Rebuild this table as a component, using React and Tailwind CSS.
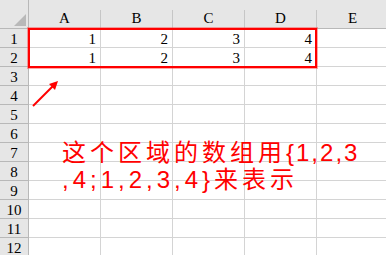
import React from 'react';

const COLS = ['A', 'B', 'C', 'D', 'E'];
const ROWS = Array.from({ length: 12 }, (_, i) => i + 1);
const DATA = {
    1: [1, 2, 3, 4, null],
    2: [1, 2, 3, 4, null],
};

function CornerCell() {
    return (
        <div className="w-[29px] h-full border-r border-[#b8b8b8] flex items-end justify-end">
            <svg width="28" height="28" viewBox="0 0 28 28" className="block">
                <polygon points="14,26 26,26 26,14" fill="#b9b9b9" />
            </svg>
        </div>
    );
}

export default function App() {
    return (
        <div className="relative w-[386px] h-[255px] overflow-hidden bg-white font-['Liberation_Serif',serif] text-black">
            {/* column headers */}
            <div className="flex h-[29px] bg-[#e6e6e6] border-b border-[#b8b8b8]">
                <CornerCell />
                {COLS.map(col => (
                    <div key={col} className="w-[72px] shrink-0 h-full pt-[10px]">
                        <div className="h-full border-r border-[#c6c6c6] flex items-end justify-center pb-[1px] text-[15px] leading-[18px]">
                            {col}
                        </div>
                    </div>
                ))}
            </div>

            {/* sheet rows */}
            {ROWS.map(row => (
                <div key={row} className="flex h-[19px]">
                    <div className="w-[29px] shrink-0 bg-[#e6e6e6] border-r border-b border-[#b8b8b8] flex items-center justify-center text-[15px] leading-none pt-[2px]">
                        {row}
                    </div>
                    {COLS.map((col, i) => (
                        <div key={col} className="w-[72px] shrink-0 border-r border-b border-[#d4d4d4] flex items-center justify-end pr-[4px] text-[15px] leading-none pt-[2px]">
                            {DATA[row] ? DATA[row][i] : null}
                        </div>
                    ))}
                </div>
            ))}

            {/* selected range outline */}
            <div className="absolute left-[28px] top-[28px] w-[289px] h-[40px] border-2 border-[#ff0000] shadow-[0_0_0_1px_rgba(255,60,60,0.45)]" />

            {/* pointer arrow */}
            <svg className="absolute left-0 top-0" width="386" height="255" viewBox="0 0 386 255">
                <line x1="33" y1="106" x2="53" y2="86" stroke="#ff0000" strokeWidth="2" />
                <polygon points="58,81 49,84 55,90" fill="#ff0000" />
            </svg>

            {/* note */}
            <div className="absolute left-[62px] top-[139px] text-[24px] leading-[27px] tracking-[4px] text-[#ff0000] font-['Liberation_Sans','Noto_Sans_CJK_SC',sans-serif] whitespace-nowrap">
                <div>这个区域的数组用<span className="tracking-[2px]">{'{'}1,2,3</span></div>
                <div>,4;1,2,3,4{'}'}来表示</div>
            </div>
        </div>
    );
}
